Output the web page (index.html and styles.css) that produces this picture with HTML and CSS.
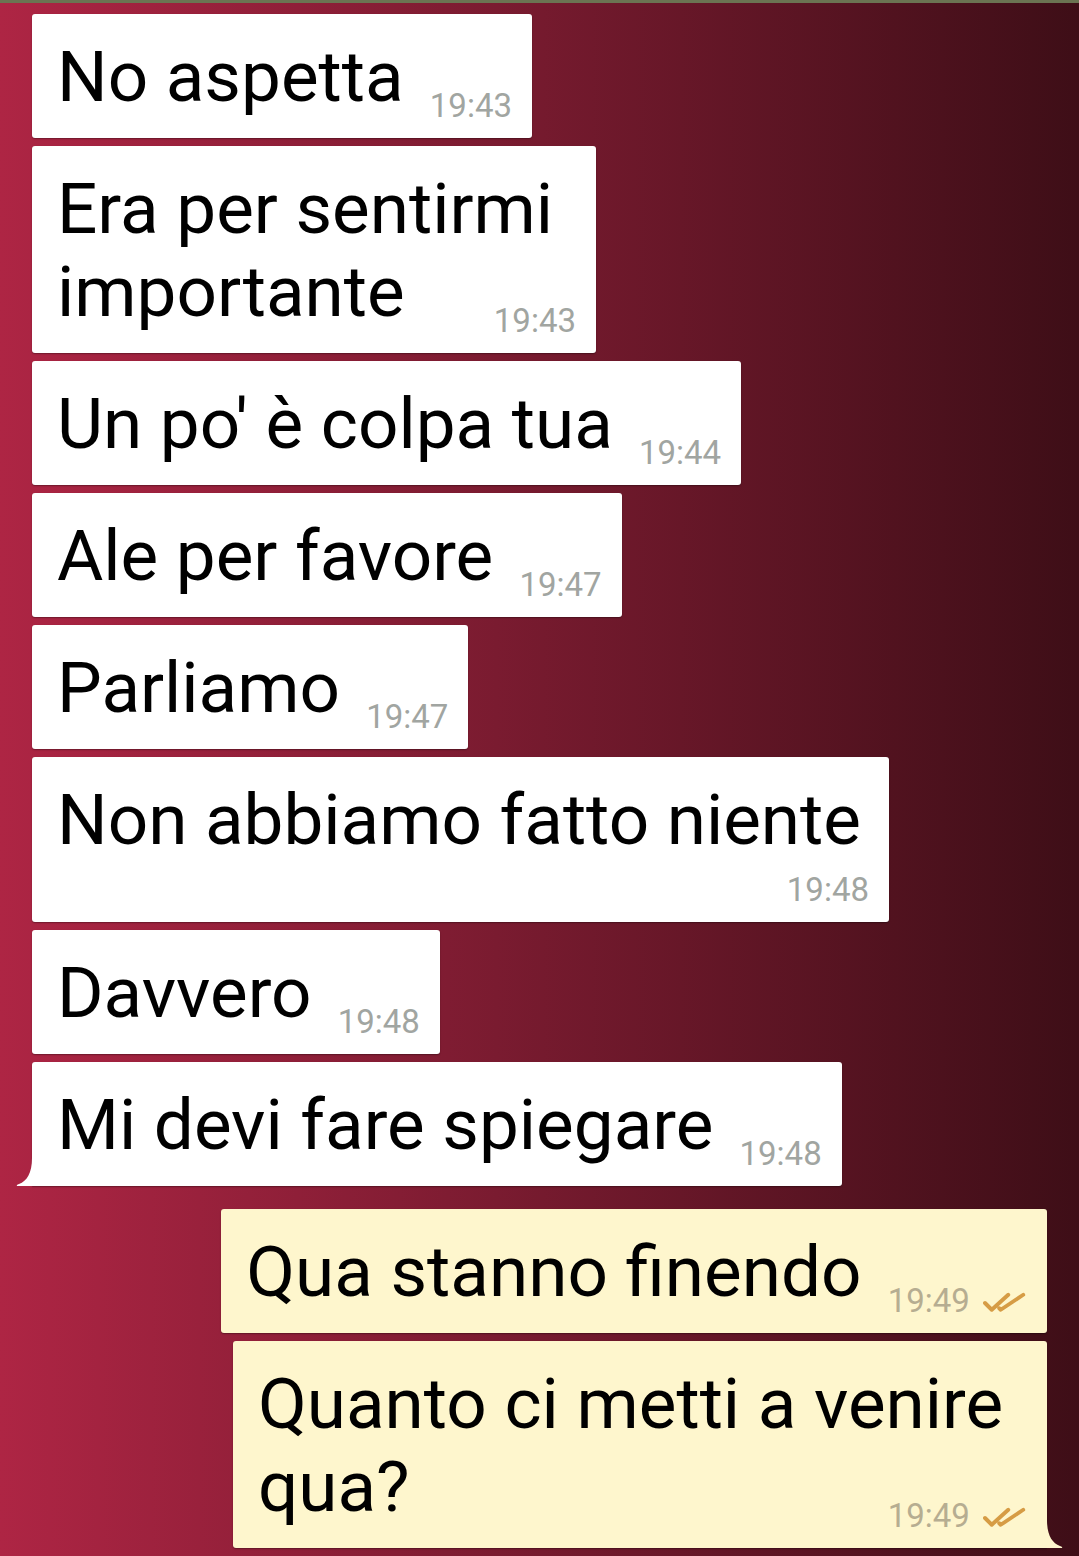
FILE: index.html
```html
<!DOCTYPE html>
<html lang="it">
<head>
  <meta charset="UTF-8">
  <title>Chat</title>
  <link rel="stylesheet" href="styles.css">
</head>
<body>
  <div class="top-bar"></div>
  <main class="chat">
    <div class="msg in"><span class="text">No aspetta</span> <span class="time">19:43</span></div>
    <div class="msg in w-564"><span class="text">Era per sentirmi importante</span> <span class="time">19:43</span></div>
    <div class="msg in"><span class="text">Un po' è colpa tua</span> <span class="time">19:44</span></div>
    <div class="msg in"><span class="text">Ale per favore</span> <span class="time">19:47</span></div>
    <div class="msg in"><span class="text">Parliamo</span> <span class="time">19:47</span></div>
    <div class="msg in w-857 stack"><span class="text">Non abbiamo fatto niente</span> <span class="time">19:48</span></div>
    <div class="msg in"><span class="text">Davvero</span> <span class="time">19:48</span></div>
    <div class="msg in tail"><span class="text">Mi devi fare spiegare</span> <span class="time">19:48</span>
      <svg class="tail-shape" width="16" height="28" viewBox="0 0 16 28"><path d="M16 0 C16 15 11 23 3 26 Q0 27 1 28 L16 28 Z"/></svg>
    </div>

    <div class="msg out first"><span class="text">Qua stanno finendo</span> <span class="time">19:49 <svg class="ticks" width="45" height="24" viewBox="0 0 30 16"><path d="M2 8 L6.5 12.5 L17.5 2.5 M11.5 11.5 L12.5 12.5 L27.5 2.5"/></svg></span></div>
    <div class="msg out w-814 tail"><span class="text">Quanto ci metti a venire qua?</span> <span class="time">19:49 <svg class="ticks" width="45" height="24" viewBox="0 0 30 16"><path d="M2 8 L6.5 12.5 L17.5 2.5 M11.5 11.5 L12.5 12.5 L27.5 2.5"/></svg></span>
      <svg class="tail-shape" width="16" height="28" viewBox="0 0 16 28"><path d="M0 0 C0 15 5 23 13 26 Q16 27 15 28 L0 28 Z"/></svg>
    </div>
  </main>
</body>
</html>
```

FILE: styles.css
```css
html, body { margin: 0; height: 100%; }
body { background: linear-gradient(to right, #ae2544 0%, #7a1b30 46%, #3e0e17 100%); font-family: Roboto, "Noto Sans", sans-serif; overflow: hidden; }
.top-bar { height: 3px; background: #6b7452; }
.chat { display: flex; flex-direction: column; align-items: flex-start; gap: 8px; padding: 11px 32px 0; }

.msg { position: relative; box-sizing: border-box; padding: 21px 20px 12px 25px; font-size: 33px; line-height: 40px; text-align-last: justify; background: #fff; border-radius: 3px; box-shadow: 0 1px 1.5px rgba(0, 0, 0, 0.35); }
.msg.out { align-self: flex-end; background: #fef6cd; }
.msg.first { margin-top: 15px; }
.msg.stack { text-align-last: right; }
.msg.tail.in { border-bottom-left-radius: 0; }
.msg.tail.out { border-bottom-right-radius: 0; }

.w-564 { width: 564px; }
.w-857 { width: 857px; }
.w-814 { width: 814px; }

.text { font-size: 71px; line-height: 83px; color: #000; }
.time { display: inline-block; margin-left: 18px; vertical-align: -16px; color: #a1a5a1; white-space: nowrap; }
.stack .time { vertical-align: -9px; }
.out .time { color: #b6ad91; }
.ticks { vertical-align: -3px; margin-left: 4px; fill: none; stroke: #d69c45; stroke-width: 2.6; stroke-linecap: round; stroke-linejoin: round; }

.tail-shape { position: absolute; bottom: 0; }
.in .tail-shape { left: -16px; fill: #fff; }
.out .tail-shape { right: -16px; fill: #fef6cd; }
```
